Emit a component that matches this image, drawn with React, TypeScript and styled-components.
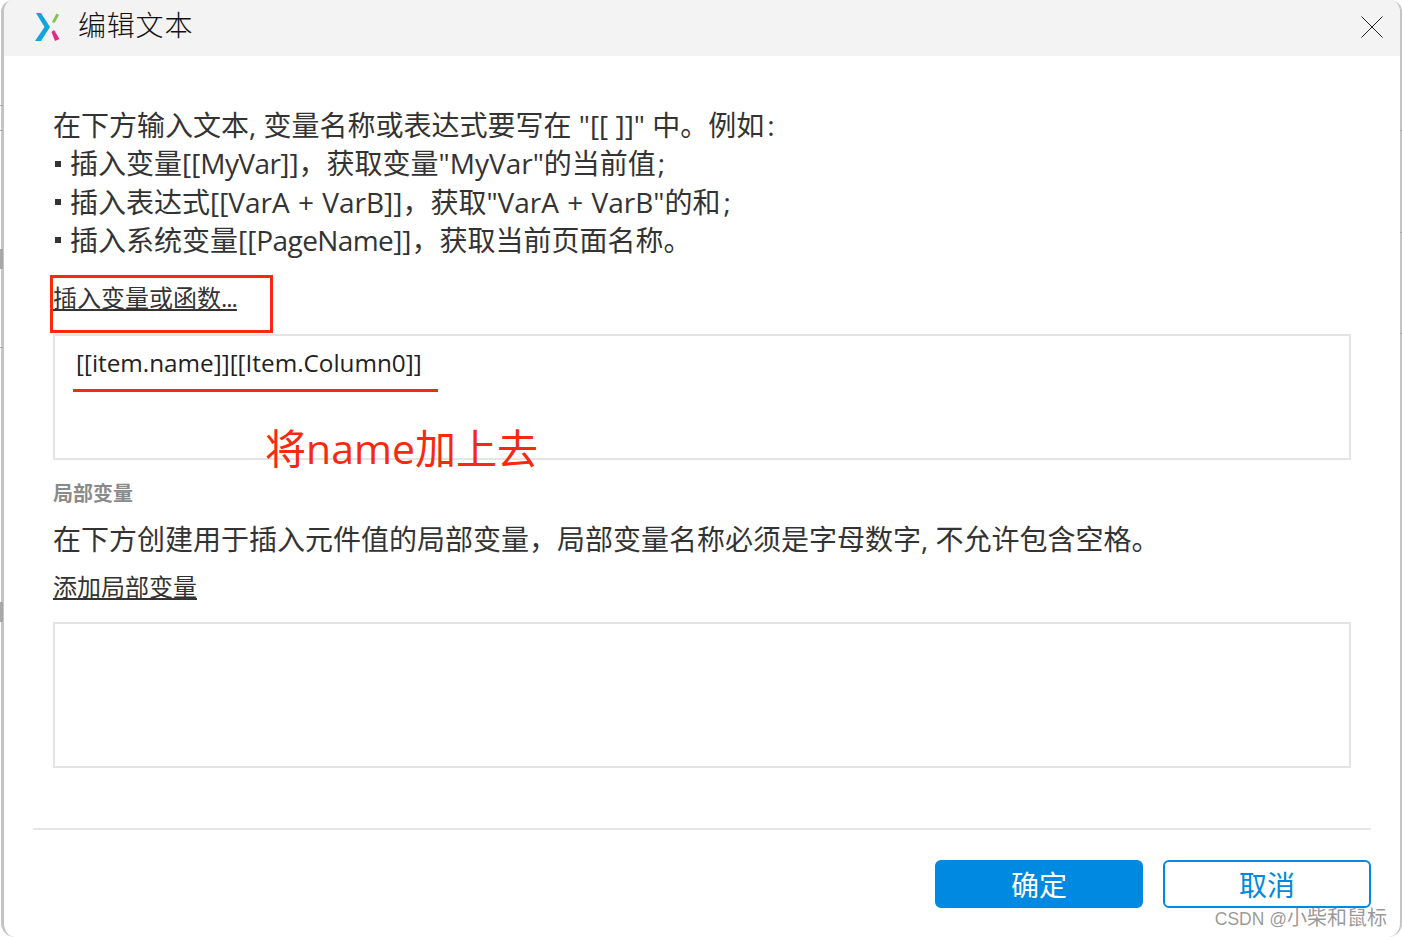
import React from "react";
import styled, { createGlobalStyle } from "styled-components";

const GlobalStyle = createGlobalStyle`
  html, body {
    margin: 0;
    padding: 0;
    background: #fff;
  }
  body {
    font-family: "Open Sans", "Noto Sans CJK SC", sans-serif;
    color: #333;
    overflow: hidden;
  }
`;

const Page = styled.div`
  position: relative;
  width: 1402px;
  height: 937px;
  overflow: hidden;
`;

const Window = styled.div`
  box-sizing: border-box;
  width: 1401px;
  height: 937px;
  margin-left: 1px;
  border-style: solid;
  border-color: #c4c4c4;
  border-width: 0 2px 0 3px;
  border-radius: 12px 12px 14px 14px;
  background: #fff;
  overflow: hidden;
  display: flex;
  flex-direction: column;
`;

const TitleBar = styled.div`
  box-sizing: border-box;
  flex: none;
  height: 56px;
  display: flex;
  align-items: center;
  background: #f3f3f3;
  padding: 0 17px 3px 30px;
`;

const Title = styled.div`
  margin-left: 18px;
  padding-bottom: 6px;
  flex: 1;
  font-family: "Noto Sans CJK SC", sans-serif;
  font-weight: 300;
  font-size: 28px;
  letter-spacing: 0.8px;
  color: #111;
`;

const Body = styled.div`
  flex: 1;
  display: flex;
  flex-direction: column;
  padding: 50px 49px 0 49px;
`;

const Intro = styled.div`
  font-size: 28px;
  line-height: 38.3px;
  color: #333;
  white-space: nowrap;
`;

const IntroLine = styled.div<{ $wordGap?: number }>`
  word-spacing: ${(p) => p.$wordGap ?? 0}px;
`;

const Tight = styled.span`
  letter-spacing: -0.6px;
`;

const Punct = styled.span<{ $gap: number }>`
  margin-left: ${(p) => p.$gap}px;
`;

const Bullet = styled.span`
  display: inline-block;
  width: 6px;
  height: 6px;
  margin: 0 9px 6px 2px;
  background: #333;
  vertical-align: middle;
`;

const LinkText = styled.a<{ $gap: number }>`
  display: block;
  width: fit-content;
  margin-top: ${(p) => p.$gap}px;
  font-size: 24px;
  line-height: 30px;
  color: #333;
  text-decoration: underline;
  text-underline-offset: 2px;
`;

const Dots = styled.span`
  letter-spacing: -1px;
`;

const FieldBox = styled.div<{ $height: number; $gap: number }>`
  box-sizing: border-box;
  height: ${(p) => p.$height}px;
  margin-top: ${(p) => p.$gap}px;
  border: 2px solid #e4e4e4;
  padding: 9px 21px;
  font-size: 24.3px;
  line-height: 36px;
  color: #222;
`;

const SectionLabel = styled.div`
  margin-top: 19px;
  font-size: 20px;
  line-height: 30px;
  font-weight: 700;
  color: #8a8a8a;
`;

const Hint = styled.div`
  margin-top: 11px;
  font-size: 28px;
  line-height: 38px;
  color: #333;
  white-space: nowrap;
`;

const Divider = styled.div`
  margin: 60px -20px 0 -20px;
  height: 2px;
  background: #e6e6e6;
`;

const Footer = styled.div`
  display: flex;
  justify-content: flex-end;
  gap: 20px;
  margin: 30px -20px 0 0;
`;

const DialogButton = styled.button<{ $primary?: boolean }>`
  box-sizing: border-box;
  width: 208px;
  height: 48px;
  padding: 0;
  border: 2px solid #0089e0;
  border-radius: 6px;
  background: ${(p) => (p.$primary ? "#0089e0" : "#fff")};
  color: ${(p) => (p.$primary ? "#fff" : "#0089e0")};
  font-family: "Noto Sans CJK SC", sans-serif;
  font-size: 28px;
  line-height: 40px;
`;

const RedFrame = styled.div`
  position: absolute;
  left: 50px;
  top: 275px;
  width: 223px;
  height: 58px;
  box-sizing: border-box;
  border: 3px solid #f8290d;
`;

const RedLine = styled.div`
  position: absolute;
  left: 73px;
  top: 389px;
  width: 365px;
  height: 3px;
  background: #f8290d;
`;

const RedNote = styled.div`
  position: absolute;
  left: 265px;
  top: 419px;
  font-size: 41px;
  line-height: 58px;
  color: #f8290d;
  white-space: nowrap;
`;

const Watermark = styled.div`
  position: absolute;
  right: 15px;
  top: 904px;
  font-family: "Liberation Sans", "Noto Sans CJK SC", sans-serif;
  font-size: 20px;
  line-height: 28px;
  color: rgba(120, 120, 120, 0.75);
  white-space: nowrap;
`;

const WatermarkLatin = styled.span`
  font-size: 17.5px;
`;

// bits of the page behind the dialog that show past its edge
const EdgeMark = styled.div<{ $top: number; $right?: boolean; $w: number; $h: number }>`
  position: absolute;
  top: ${(p) => p.$top}px;
  ${(p) => (p.$right ? "right: 0;" : "left: 0;")}
  width: ${(p) => p.$w}px;
  height: ${(p) => p.$h}px;
  background: #a8a8a8;
`;

const Logo = () => (
  <svg width="26" height="30" viewBox="0 0 26 30">
    <path d="M2 1 L7 1 L16 15 L7 29 L1 29 L10.5 15 Z" fill="#12a5dd" />
    <path d="M18 10 L22.5 1.5 L25 3 L20.5 11 Z" fill="#7dc24c" />
    <path d="M17.5 20 L20 18 L25.5 27 L21 29 Z" fill="#e5278d" />
  </svg>
);

const CloseIcon = () => (
  <svg width="22" height="22" viewBox="0 0 22 22">
    <path d="M0.5 0.5 L21.5 21.5 M21.5 0.5 L0.5 21.5" stroke="#222" strokeWidth="1" fill="none" />
  </svg>
);

export default function App() {
  return (
    <Page>
      <GlobalStyle />
      <Window>
        <TitleBar>
          <Logo />
          <Title>编辑文本</Title>
          <CloseIcon />
        </TitleBar>
        <Body>
          <Intro>
            <IntroLine>在下方输入文本, 变量名称或表达式要写在 "[[ ]]" 中。例如<Punct $gap={3}>:</Punct></IntroLine>
            <IntroLine><Bullet />插入变量[[<Tight>MyVar</Tight>]]，获取变量"MyVar"的当前值<Punct $gap={2}>;</Punct></IntroLine>
            <IntroLine $wordGap={1}><Bullet />插入表达式[[VarA + VarB]]，获取"VarA + VarB"的和<Punct $gap={3}>;</Punct></IntroLine>
            <IntroLine><Bullet />插入系统变量[[<Tight>PageName</Tight>]]，获取当前页面名称。</IntroLine>
          </Intro>
          <LinkText $gap={24}>插入变量或函数<Dots>...</Dots></LinkText>
          <FieldBox $height={126} $gap={21}>[[item.name]][[Item.Column0]]</FieldBox>
          <SectionLabel>局部变量</SectionLabel>
          <Hint>在下方创建用于插入元件值的局部变量，局部变量名称必须是字母数字, 不允许包含空格。</Hint>
          <LinkText $gap={14}>添加局部变量</LinkText>
          <FieldBox $height={146} $gap={20} />
          <Divider />
          <Footer>
            <DialogButton $primary>确定</DialogButton>
            <DialogButton>取消</DialogButton>
          </Footer>
        </Body>
      </Window>
      <EdgeMark $top={105} $w={3} $h={1} />
      <EdgeMark $top={130} $w={3} $h={1} />
      <EdgeMark $top={249} $w={3} $h={20} />
      <EdgeMark $top={347} $w={3} $h={1} />
      <EdgeMark $top={602} $w={3} $h={20} />
      <EdgeMark $top={130} $right $w={2} $h={1} />
      <EdgeMark $top={232} $right $w={2} $h={1} />
      <EdgeMark $top={333} $right $w={2} $h={1} />
      <RedFrame />
      <RedLine />
      <RedNote>将name加上去</RedNote>
      <Watermark><WatermarkLatin>CSDN @</WatermarkLatin>小柴和鼠标</Watermark>
    </Page>
  );
}
